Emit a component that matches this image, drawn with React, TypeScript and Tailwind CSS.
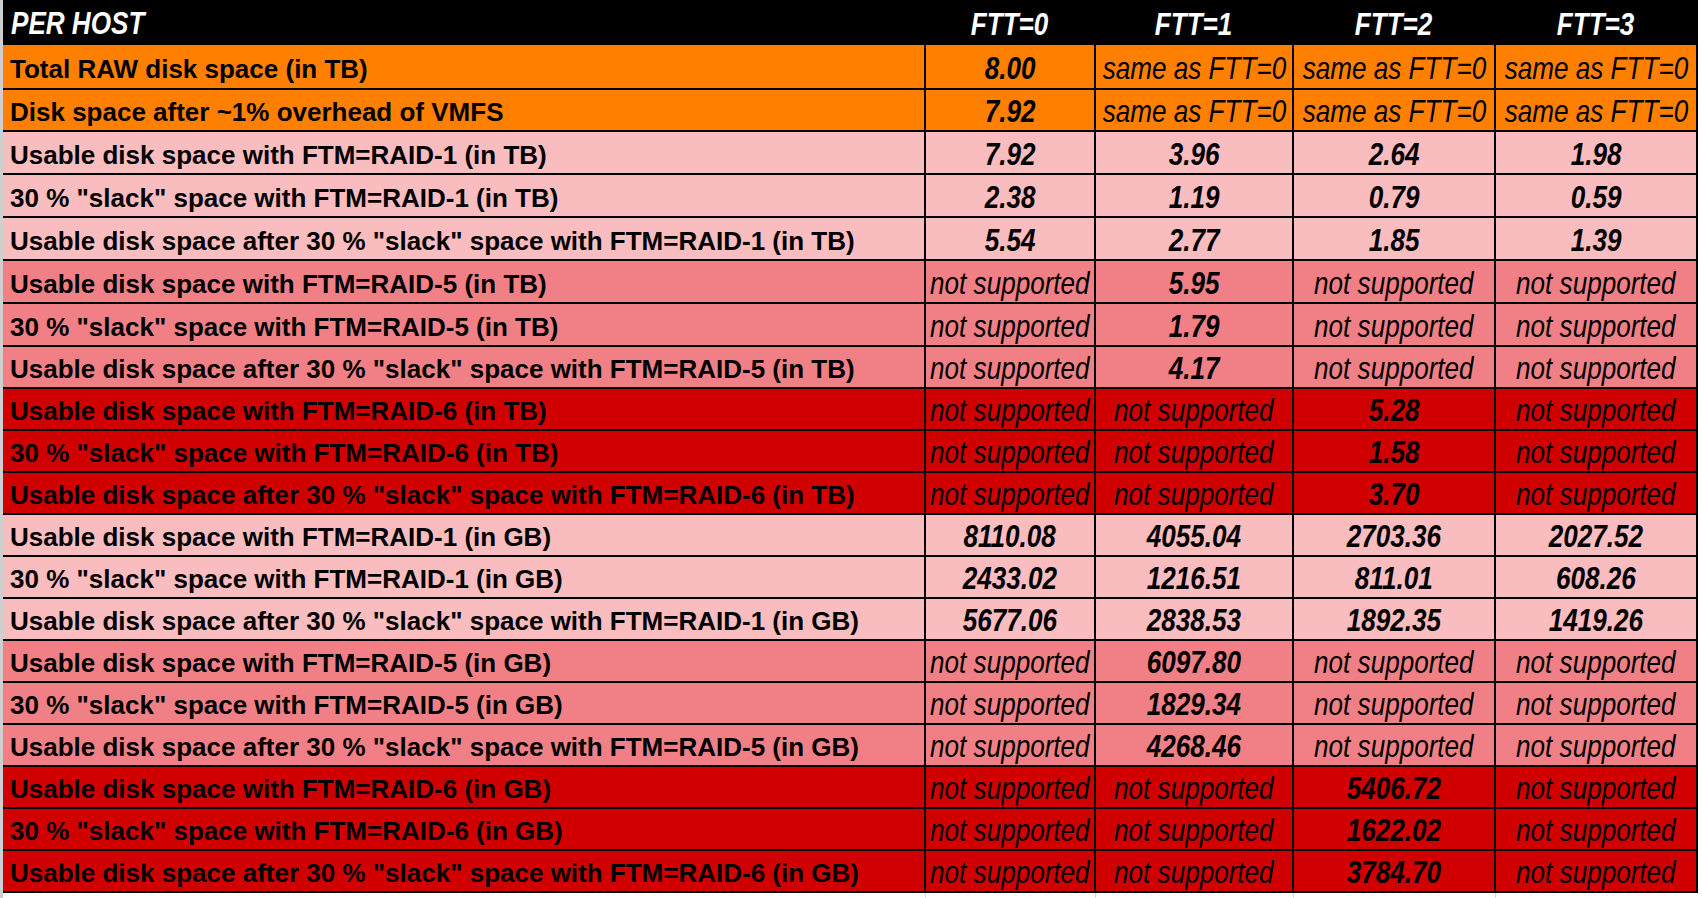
import React from "react";

type Kind = "orange" | "light" | "mid" | "red";

const NS = "ns";
const SAME = "same";

const rows: { label: string; kind: Kind; vals: string[]; h: string }[] = [
  { label: "Total RAW disk space (in TB)", kind: "orange", vals: ["8.00", SAME, SAME, SAME], h: "h-[45px]" },
  { label: "Disk space after ~1% overhead of VMFS", kind: "orange", vals: ["7.92", SAME, SAME, SAME], h: "h-[42px]" },
  { label: "Usable disk space with FTM=RAID-1 (in TB)", kind: "light", vals: ["7.92", "3.96", "2.64", "1.98"], h: "h-[43px]" },
  { label: '30 % "slack" space with FTM=RAID-1 (in TB)', kind: "light", vals: ["2.38", "1.19", "0.79", "0.59"], h: "h-[43px]" },
  { label: 'Usable disk space after 30 % "slack" space with FTM=RAID-1 (in TB)', kind: "light", vals: ["5.54", "2.77", "1.85", "1.39"], h: "h-[43px]" },
  { label: "Usable disk space with FTM=RAID-5 (in TB)", kind: "mid", vals: [NS, "5.95", NS, NS], h: "h-[43px]" },
  { label: '30 % "slack" space with FTM=RAID-5 (in TB)', kind: "mid", vals: [NS, "1.79", NS, NS], h: "h-[43px]" },
  { label: 'Usable disk space after 30 % "slack" space with FTM=RAID-5 (in TB)', kind: "mid", vals: [NS, "4.17", NS, NS], h: "h-[42px]" },
  { label: "Usable disk space with FTM=RAID-6 (in TB)", kind: "red", vals: [NS, NS, "5.28", NS], h: "h-[42px]" },
  { label: '30 % "slack" space with FTM=RAID-6 (in TB)', kind: "red", vals: [NS, NS, "1.58", NS], h: "h-[42px]" },
  { label: 'Usable disk space after 30 % "slack" space with FTM=RAID-6 (in TB)', kind: "red", vals: [NS, NS, "3.70", NS], h: "h-[42px]" },
  { label: "Usable disk space with FTM=RAID-1 (in GB)", kind: "light", vals: ["8110.08", "4055.04", "2703.36", "2027.52"], h: "h-[42px]" },
  { label: '30 % "slack" space with FTM=RAID-1 (in GB)', kind: "light", vals: ["2433.02", "1216.51", "811.01", "608.26"], h: "h-[42px]" },
  { label: 'Usable disk space after 30 % "slack" space with FTM=RAID-1 (in GB)', kind: "light", vals: ["5677.06", "2838.53", "1892.35", "1419.26"], h: "h-[42px]" },
  { label: "Usable disk space with FTM=RAID-5 (in GB)", kind: "mid", vals: [NS, "6097.80", NS, NS], h: "h-[42px]" },
  { label: '30 % "slack" space with FTM=RAID-5 (in GB)', kind: "mid", vals: [NS, "1829.34", NS, NS], h: "h-[42px]" },
  { label: 'Usable disk space after 30 % "slack" space with FTM=RAID-5 (in GB)', kind: "mid", vals: [NS, "4268.46", NS, NS], h: "h-[42px]" },
  { label: "Usable disk space with FTM=RAID-6 (in GB)", kind: "red", vals: [NS, NS, "5406.72", NS], h: "h-[42px]" },
  { label: '30 % "slack" space with FTM=RAID-6 (in GB)', kind: "red", vals: [NS, NS, "1622.02", NS], h: "h-[42px]" },
  { label: 'Usable disk space after 30 % "slack" space with FTM=RAID-6 (in GB)', kind: "red", vals: [NS, NS, "3784.70", NS], h: "h-[42px]" },
];

const bg: Record<Kind, string> = {
  orange: "bg-[#ff8000]",
  light: "bg-[#f9bcbf]",
  mid: "bg-[#f08085]",
  red: "bg-[#d00000]",
};

const colW = ["w-[923px]", "w-[170px]", "w-[198px]", "w-[202px]", "w-[202px]"];

function Value({ v }: { v: string }) {
  if (v === NS || v === SAME) {
    return (
      <span className="inline-block whitespace-nowrap italic font-normal text-[32px] leading-none scale-x-[0.815]">
        {v === NS ? "not supported" : "same as FTT=0"}
      </span>
    );
  }
  return (
    <span className="inline-block whitespace-nowrap italic font-bold text-[32px] leading-none scale-x-[0.815]">
      {v}
    </span>
  );
}

export default function App() {
  return (
    <div
      className="w-[1702px] h-[898px] bg-white flex overflow-hidden text-black"
      style={{ fontFamily: '"Liberation Sans", Arial, sans-serif' }}
    >
      <div className="w-[3px] shrink-0 bg-[#cfcfcf]" />
      <div className="flex flex-col w-[1697px] shrink-0">
        <div className="flex h-[45px] bg-black text-white w-[1695px]">
          <div className={`${colW[0]} flex items-center pl-[8px] pt-[1px]`}>
            <span className="inline-block origin-left whitespace-nowrap italic font-bold text-[32px] leading-none scale-x-[0.815]">
              PER HOST
            </span>
          </div>
          {["FTT=0", "FTT=1", "FTT=2", "FTT=3"].map((t, i) => (
            <div key={t} className={`${colW[i + 1]} flex items-center justify-center pr-[2px] pt-[2px]`}>
              <span className="inline-block whitespace-nowrap italic font-bold text-[32px] leading-none scale-x-[0.815]">
                {t}
              </span>
            </div>
          ))}
        </div>
        {rows.map((r, ri) => (
          <div key={ri} className={`flex ${r.h} w-[1695px] ${bg[r.kind]}`}>
            <div className={`${colW[0]} border-r-2 border-b-2 border-black flex items-center pl-[7px] pt-[4px]`}>
              <span className="whitespace-nowrap font-bold text-[26px] leading-none">{r.label}</span>
            </div>
            {r.vals.map((v, vi) => (
              <div
                key={vi}
                className={`${colW[vi + 1]} border-r-2 border-b-2 border-black flex items-center justify-center pt-[2px]`}
              >
                <Value v={v} />
              </div>
            ))}
          </div>
        ))}
        <div className="flex flex-1 w-[1695px]">
          <div className={`${colW[0]} border-r border-[#d6d6d6]`} />
          <div className={`${colW[1]} border-r border-[#d6d6d6]`} />
          <div className={`${colW[2]} border-r border-[#d6d6d6]`} />
          <div className={`${colW[3]} border-r border-[#d6d6d6]`} />
          <div className={`${colW[4]}`} />
        </div>
      </div>
      <div className="flex-1 bg-white" />
    </div>
  );
}
